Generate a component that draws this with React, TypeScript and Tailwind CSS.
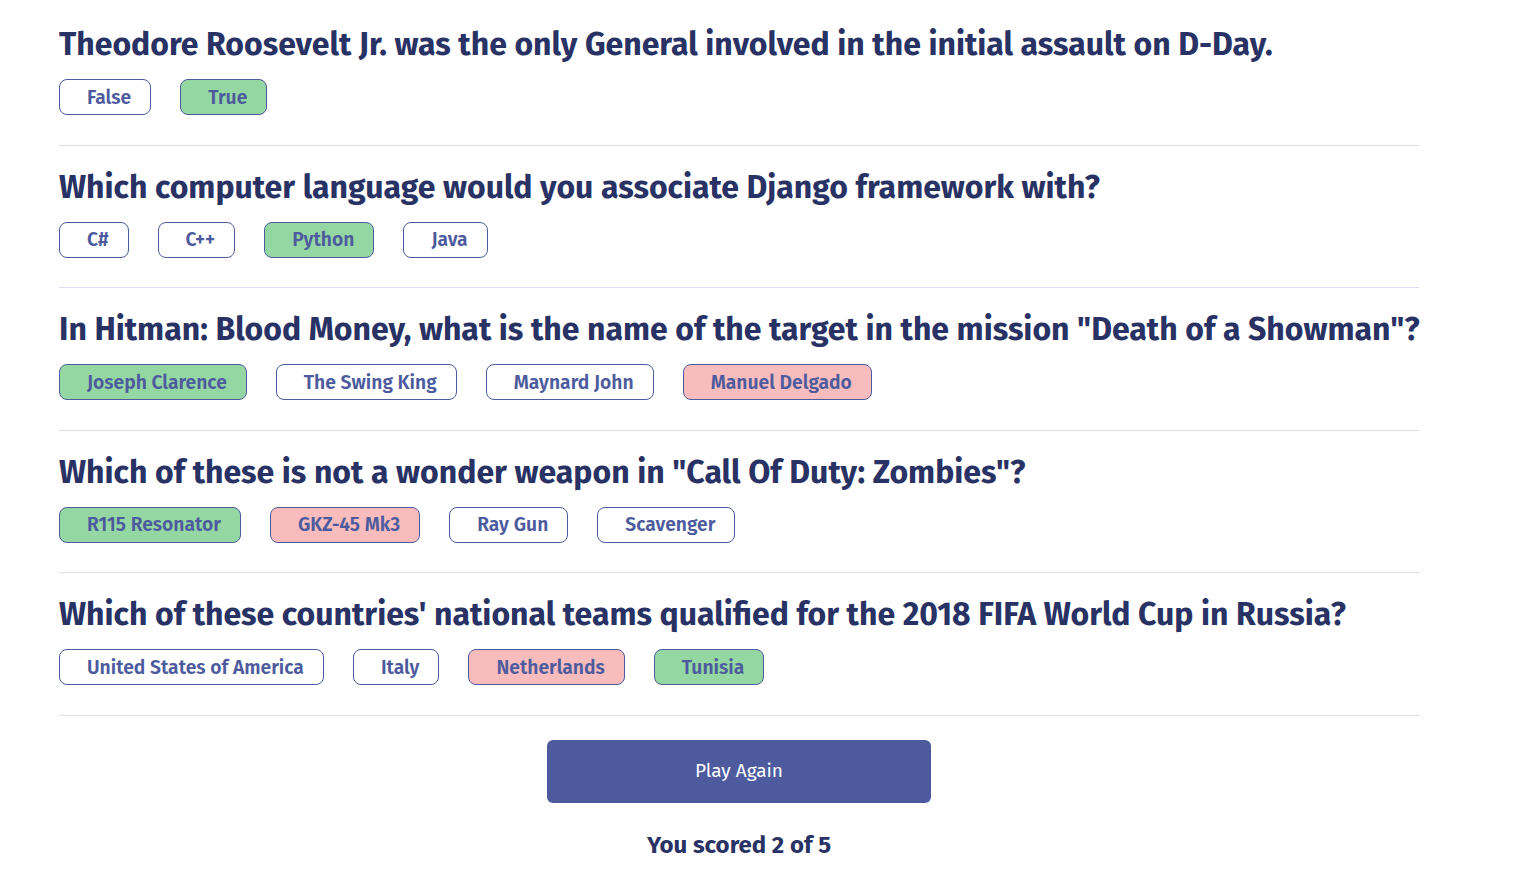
const questions = [
  {
    q: "Theodore Roosevelt Jr. was the only General involved in the initial assault on D-Day.",
    answers: [
      { text: "False", state: "none" },
      { text: "True", state: "correct" },
    ],
  },
  {
    q: "Which computer language would you associate Django framework with?",
    answers: [
      { text: "C#", state: "none" },
      { text: "C++", state: "none" },
      { text: "Python", state: "correct" },
      { text: "Java", state: "none" },
    ],
  },
  {
    q: 'In Hitman: Blood Money, what is the name of the target in the mission "Death of a Showman"?',
    answers: [
      { text: "Joseph Clarence", state: "correct" },
      { text: "The Swing King", state: "none" },
      { text: "Maynard John", state: "none" },
      { text: "Manuel Delgado", state: "wrong" },
    ],
  },
  {
    q: 'Which of these is not a wonder weapon in "Call Of Duty: Zombies"?',
    answers: [
      { text: "R115 Resonator", state: "correct" },
      { text: "GKZ-45 Mk3", state: "wrong" },
      { text: "Ray Gun", state: "none" },
      { text: "Scavenger", state: "none" },
    ],
  },
  {
    q: "Which of these countries' national teams qualified for the 2018 FIFA World Cup in Russia?",
    answers: [
      { text: "United States of America", state: "none" },
      { text: "Italy", state: "none" },
      { text: "Netherlands", state: "wrong" },
      { text: "Tunisia", state: "correct" },
    ],
  },
];

const stateClass: Record<string, string> = {
  none: "bg-white",
  correct: "bg-[#94d7a2]",
  wrong: "bg-[#f8bcbc]",
};

export default function App() {
  return (
    <div
      className="min-h-screen bg-white pt-[25px]"
      style={{ fontFamily: '"Fira Sans", Lato, "Noto Sans", sans-serif' }}
    >
      <div className="mx-[59px] w-[1360px]">
        {questions.map((item) => (
          <div key={item.q} className="border-b border-[#dbdef0] pb-[29.5px] mb-[22px]">
            <h2 className="text-[32px] leading-[38.5px] font-bold text-[#293264] whitespace-nowrap">
              {item.q}
            </h2>
            <div className="mt-[15.5px] flex gap-[29px]">
              {item.answers.map((a) => (
                <button
                  key={a.text}
                  className={`h-[36px] rounded-[8px] border border-[#4d5b9e] pt-[2px] pl-[27px] pr-[19px] text-[19.3px] font-semibold text-[#4d5b9e] ${stateClass[a.state]}`}
                >
                  {a.text}
                </button>
              ))}
            </div>
          </div>
        ))}
        <div className="flex flex-col items-center">
          <button className="mt-[2px] h-[63px] w-[384px] rounded-[6px] bg-[#4d5b9e] text-[19px] text-white">
            Play Again
          </button>
          <p className="mt-[26px] text-[24px] leading-[32px] font-bold text-[#293264]">
            You scored 2 of 5
          </p>
        </div>
      </div>
    </div>
  );
}
